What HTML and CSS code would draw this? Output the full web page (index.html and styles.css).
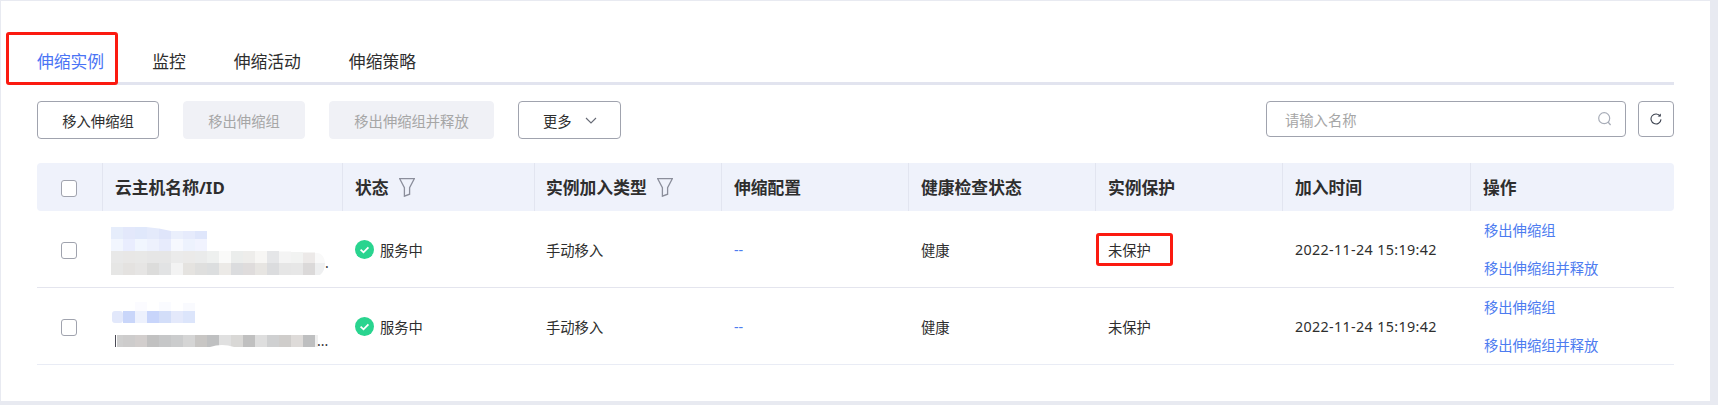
FILE: index.html
```html
<!DOCTYPE html>
<html lang="zh-CN">

<head>
  <meta charset="UTF-8" />
  <title>伸缩实例</title>
  <link rel="stylesheet" href="styles.css">
</head>

<body>
  <div class="panel">
    <div class="tabs">
      <a class="tab active">伸缩实例</a>
      <a class="tab">监控</a>
      <a class="tab">伸缩活动</a>
      <a class="tab">伸缩策略</a>
    </div>
    <div class="mark mark-tab"></div>

    <div class="toolbar">
      <button class="btn btn-in">移入伸缩组</button>
      <button class="btn btn-out" disabled>移出伸缩组</button>
      <button class="btn btn-release" disabled>移出伸缩组并释放</button>
      <button class="btn btn-more">更多
        <svg class="chevron" width="12" height="7" viewBox="0 0 12 7">
          <path d="M1 1l5 5 5-5" fill="none" stroke="#666a75" stroke-width="1.1" />
        </svg>
      </button>
      <div class="search">
        <span class="placeholder">请输入名称</span>
        <svg width="14" height="14" viewBox="0 0 14 14">
          <circle cx="6.2" cy="6.2" r="5.5" fill="none" stroke="#a8adb8" stroke-width="1.2" />
          <path d="M10 10l2.6 3" fill="none" stroke="#a8adb8" stroke-width="1.2" />
        </svg>
      </div>
      <button class="btn btn-refresh">
        <svg width="12" height="12" viewBox="0 0 12 12">
          <path d="M10.2 3.2A5 5 0 1 0 11 6.4" fill="none" stroke="#3d4350" stroke-width="1.1" />
          <path d="M7.6 3.6h3.2V.6z" fill="#3d4350" />
        </svg>
      </button>
    </div>

    <table class="grid">
      <colgroup>
        <col class="c-check">
        <col class="c-name">
        <col class="c-status">
        <col class="c-wide">
        <col class="c-wide">
        <col class="c-wide">
        <col class="c-wide">
        <col class="c-time">
        <col>
      </colgroup>
      <thead>
        <tr>
          <th class="cell-check"><span class="checkbox"></span></th>
          <th>云主机名称/ID</th>
          <th>
            <span class="th-filter">状态
              <svg width="16" height="19" viewBox="0 0 16 19">
                <path d="M.7.7h14.6L10.6 9.6v6.6l-5.2 2V9.6z" fill="none" stroke="#8b8e9b" stroke-width="1.3" />
              </svg>
            </span>
          </th>
          <th class="cell-type">
            <span class="th-filter">实例加入类型
              <svg width="16" height="19" viewBox="0 0 16 19">
                <path d="M.7.7h14.6L10.6 9.6v6.6l-5.2 2V9.6z" fill="none" stroke="#8b8e9b" stroke-width="1.3" />
              </svg>
            </span>
          </th>
          <th>伸缩配置</th>
          <th>健康检查状态</th>
          <th>实例保护</th>
          <th>加入时间</th>
          <th>操作</th>
        </tr>
      </thead>
      <tbody>
        <tr>
          <td class="cell-check"><span class="checkbox"></span></td>
          <td class="cell-name">
            <!-- blurred name and id -->
            <svg class="mosaic" width="230" height="50" viewBox="0 0 230 50">
              <g>
                <rect x="1" y="2" width="12" height="12" fill="#e6edfb" />
                <rect x="13" y="2" width="12" height="12" fill="#e3e8fb" />
                <rect x="25" y="2" width="12" height="12" fill="#e0e8fb" />
                <rect x="37" y="2" width="12" height="12" fill="#e4eafb" />
                <rect x="49" y="2" width="12" height="12" fill="#dfe5fa" />
                <rect x="61" y="2" width="12" height="12" fill="#eaeffc" />
                <rect x="73" y="2" width="12" height="12" fill="#e6ebfc" />
                <rect x="85" y="2" width="12" height="12" fill="#dfe6fb" />
                <rect x="1" y="14" width="12" height="12" fill="#f2f6fe" />
                <rect x="13" y="14" width="12" height="12" fill="#e9edfe" />
                <rect x="25" y="14" width="12" height="12" fill="#f1f6fe" />
                <rect x="37" y="14" width="12" height="12" fill="#edf1fd" />
                <rect x="49" y="14" width="12" height="12" fill="#e7ebfc" />
                <rect x="61" y="14" width="12" height="12" fill="#f6f8fe" />
                <rect x="73" y="14" width="12" height="12" fill="#edf2fd" />
                <rect x="85" y="14" width="12" height="12" fill="#f1f3fe" />
                <polygon points="36,2 97,2 97,6 61,6 49,3.5" fill="#fff" />
              </g>
              <g>
                <rect x="1" y="26" width="12" height="12" fill="#e8e8e8" />
                <rect x="13" y="26" width="12" height="12" fill="#e8e7e6" />
                <rect x="25" y="26" width="12" height="12" fill="#e8e8e7" />
                <rect x="37" y="26" width="12" height="12" fill="#e6e6e6" />
                <rect x="49" y="26" width="12" height="12" fill="#e6e6e6" />
                <rect x="61" y="26" width="12" height="12" fill="#ebebeb" />
                <rect x="73" y="26" width="12" height="12" fill="#ebeae9" />
                <rect x="85" y="26" width="12" height="12" fill="#eaebeb" />
                <rect x="97" y="26" width="12" height="12" fill="#eef0ef" />
                <rect x="109" y="26" width="12" height="12" fill="#fafaf9" />
                <rect x="121" y="26" width="12" height="12" fill="#ebedec" />
                <rect x="133" y="26" width="12" height="12" fill="#eeedeb" />
                <rect x="145" y="26" width="12" height="12" fill="#f7f6f4" />
                <rect x="157" y="26" width="12" height="12" fill="#e5e6e8" />
                <rect x="169" y="26.5" width="12" height="11.5" fill="#f4f4f4" />
                <rect x="181" y="27" width="12" height="11" fill="#f2f3f2" />
                <rect x="193" y="27.5" width="12" height="10.5" fill="#ece9e8" />
                <path d="M205 28h3q6 1 7 10h-10z" fill="#f9f9f9" />
                <rect x="1" y="38" width="12" height="12" fill="#e6e6e5" />
                <rect x="13" y="38" width="12" height="12" fill="#e4e2e0" />
                <rect x="25" y="38" width="12" height="12" fill="#e6e5e4" />
                <rect x="37" y="38" width="12" height="12" fill="#dcdcdb" />
                <rect x="49" y="38" width="12" height="12" fill="#e2e3e4" />
                <rect x="61" y="38" width="12" height="12" fill="#f3f3f3" />
                <rect x="73" y="38" width="12" height="12" fill="#e5e3e0" />
                <rect x="85" y="38" width="12" height="12" fill="#dfdfde" />
                <rect x="97" y="38" width="12" height="12" fill="#dcdedf" />
                <rect x="109" y="38" width="12" height="12" fill="#eceae7" />
                <rect x="121" y="38" width="12" height="12" fill="#dbdcde" />
                <rect x="133" y="38" width="12" height="12" fill="#dfdcdc" />
                <rect x="145" y="38" width="12" height="12" fill="#e7e5e2" />
                <rect x="157" y="38" width="12" height="12" fill="#dbdcde" />
                <rect x="169" y="38" width="12" height="12" fill="#e6e6e6" />
                <rect x="181" y="38" width="12" height="12" fill="#e7e7e7" />
                <rect x="193" y="38" width="12" height="12" fill="#dbd9d9" />
                <path d="M205 38h10q0 8-5 12h-5z" fill="#eeeff0" />
              </g>
              <text class="mosaic-dots" x="215" y="43">.</text>
            </svg>
          </td>
          <td>
            <span class="state">
              <svg width="19" height="19" viewBox="0 0 19 19">
                <circle cx="9.5" cy="9.5" r="9.5" fill="#29d48f" />
                <path d="M5.6 9.6l2.9 2.7 4.9-4.9" fill="none" stroke="#fff" stroke-width="1.8" />
              </svg>
              服务中
            </span>
          </td>
          <td class="cell-type">手动移入</td>
          <td class="link">--</td>
          <td>健康</td>
          <td>未保护</td>
          <td class="time">2022-11-24 15:19:42</td>
          <td class="cell-action">
            <a class="link">移出伸缩组</a>
            <a class="link">移出伸缩组并释放</a>
          </td>
        </tr>
        <tr>
          <td class="cell-check"><span class="checkbox"></span></td>
          <td class="cell-name">
            <svg class="mosaic" width="230" height="50" viewBox="0 0 230 50">
              <g>
                <rect x="25" y="0" width="12" height="9" fill="#fbfbff" />
                <rect x="49" y="0" width="12" height="9" fill="#fafbff" />
                <rect x="73" y="1" width="12" height="8" fill="#f9fafe" />
                <rect x="2" y="9" width="11" height="12" rx="3" fill="#e2e8fb" />
                <rect x="13" y="9" width="12" height="12" fill="#c9d6fa" />
                <rect x="25" y="9" width="12" height="12" fill="#edf1fd" />
                <rect x="37" y="9" width="12" height="12" fill="#c8d5fb" />
                <rect x="49" y="9" width="12" height="12" fill="#d3def9" />
                <rect x="61" y="9" width="12" height="12" fill="#e4e9fb" />
                <rect x="73" y="9" width="12" height="12" fill="#dce5fb" />
              </g>
              <g>
                <rect x="5" y="33" width="1" height="12" fill="#4a4a55" />
                <rect x="7" y="33" width="6" height="12" fill="#cfcfcf" />
                <rect x="13" y="33" width="12" height="12" fill="#cdcccc" />
                <rect x="25" y="33" width="12" height="12" fill="#d2cecd" />
                <rect x="37" y="33" width="12" height="12" fill="#c1c1c1" />
                <rect x="49" y="33" width="12" height="12" fill="#c6c7c8" />
                <rect x="61" y="33" width="12" height="12" fill="#cbcccd" />
                <rect x="73" y="33" width="12" height="12" fill="#d5d5d5" />
                <rect x="85" y="33" width="12" height="12" fill="#c8c6c4" />
                <rect x="97" y="33" width="12" height="12" fill="#bfc0c1" />
                <rect x="109" y="33" width="12" height="12" fill="#e0e0e0" />
                <rect x="121" y="33" width="12" height="12" fill="#d9d8d6" />
                <rect x="133" y="33" width="12" height="12" fill="#c0c0c0" />
                <rect x="145" y="33" width="12" height="12" fill="#dedede" />
                <rect x="157" y="33" width="12" height="12" fill="#cfd0d1" />
                <rect x="169" y="33" width="12" height="12" fill="#cfcdcb" />
                <rect x="181" y="33" width="12" height="12" fill="#dedbd9" />
                <rect x="193" y="33" width="12" height="12" fill="#bebfc0" />
                <rect x="205" y="33" width="3" height="12" fill="#f0f0f0" />
                <path d="M100 45q12-4 24 0z" fill="#fff" />
              </g>
              <text class="mosaic-dots" x="207" y="44">...</text>
            </svg>
          </td>
          <td>
            <span class="state">
              <svg width="19" height="19" viewBox="0 0 19 19">
                <circle cx="9.5" cy="9.5" r="9.5" fill="#29d48f" />
                <path d="M5.6 9.6l2.9 2.7 4.9-4.9" fill="none" stroke="#fff" stroke-width="1.8" />
              </svg>
              服务中
            </span>
          </td>
          <td class="cell-type">手动移入</td>
          <td class="link">--</td>
          <td>健康</td>
          <td>未保护</td>
          <td class="time">2022-11-24 15:19:42</td>
          <td class="cell-action">
            <a class="link">移出伸缩组</a>
            <a class="link">移出伸缩组并释放</a>
          </td>
        </tr>
      </tbody>
    </table>
    <div class="mark mark-cell"></div>
  </div>
</body>

</html>
```

FILE: styles.css
```css
* {
  box-sizing: border-box;
}

html,
body {
  height: 100%;
}

body {
  margin: 0;
  overflow: hidden;
  font-family: "Noto Sans", "Noto Sans CJK SC", sans-serif;
  font-size: 14.3px;
  color: #2e2e2e;
  background: #e8eaf1;
}

.panel {
  position: relative;
  height: 400px;
  margin: 1px 8px 0 1px;
  padding: 0 36px;
  background: #fff;
}

.tabs {
  display: flex;
  gap: 48px;
  height: 84px;
  padding-top: 47px;
  border-bottom: 3px solid #e2e4ef;
  font-size: 16.8px;
  line-height: 28px;
}

.tab.active {
  color: #4a74f5;
}

.mark {
  position: absolute;
  border: 3px solid #fb1a10;
  border-radius: 3px;
}

.mark-tab {
  left: 5px;
  top: 31px;
  width: 112px;
  height: 53px;
}

.mark-cell {
  left: 1095px;
  top: 232px;
  width: 77px;
  height: 33px;
}

.toolbar {
  display: flex;
  align-items: flex-start;
  gap: 24px;
  margin-top: 16px;
}

.btn {
  height: 38px;
  padding: 0;
  border: 1px solid #a0a3ae;
  border-radius: 4px;
  background: #fff;
  color: #2e2e2e;
  font: inherit;
}

.btn[disabled] {
  border-color: #f0f1f6;
  background: #f0f1f6;
  color: #a6a6a6;
}

.btn-in,
.btn-out {
  width: 122px;
}

.btn-release {
  width: 165px;
}

.btn-more {
  display: flex;
  align-items: center;
  gap: 13px;
  width: 103px;
  padding-left: 24px;
}

.search {
  display: flex;
  align-items: center;
  justify-content: space-between;
  width: 360px;
  height: 36px;
  margin-left: auto;
  padding: 0 13px 0 18px;
  border: 1px solid #a0a3ae;
  border-radius: 4px;
}

.placeholder {
  color: #a6a6a6;
}

.btn-refresh {
  display: flex;
  align-items: center;
  justify-content: center;
  width: 36px;
  height: 36px;
  margin-left: -12px;
}

.grid {
  width: 1637px;
  margin-top: 24px;
  border-collapse: separate;
  border-spacing: 0;
  table-layout: fixed;
}

.c-check {
  width: 65px;
}

.c-name {
  width: 240px;
}

.c-status {
  width: 192px;
}

.c-wide {
  width: 187px;
}

.c-time {
  width: 188px;
}

th {
  height: 48px;
  padding: 0 0 0 12px;
  border-left: 1px solid #e2e5f0;
  background: #eff2fb;
  font-size: 16.8px;
  font-weight: 700;
  text-align: left;
}

th:first-child {
  border-left: 0;
  border-radius: 4px 0 0 4px;
}

th:last-child {
  border-radius: 0 4px 4px 0;
}

td {
  height: 77px;
  padding: 0 0 0 13px;
  border-bottom: 1px solid #e4e5ee;
}

tbody tr:last-child td {
  border-bottom-color: #e9ecf5;
}

th.cell-check,
td.cell-check {
  padding: 0 2px 0 0;
  text-align: center;
}

th.cell-type {
  padding-left: 11px;
}

td.cell-type {
  padding-left: 12px;
}

.checkbox {
  display: inline-block;
  width: 16px;
  height: 17px;
  border: 1px solid #a0a3ae;
  border-radius: 3px;
  background: #fff;
  vertical-align: middle;
}

.th-filter {
  display: inline-flex;
  align-items: center;
  gap: 10px;
}

.cell-name {
  padding-left: 8px;
}

.mosaic {
  display: block;
  margin-top: 1px;
}

.mosaic-dots {
  font-size: 14px;
  fill: #333;
}

.state {
  display: inline-flex;
  align-items: center;
  gap: 6px;
  vertical-align: middle;
}

.link {
  color: #4d7cf0;
}

.time {
  letter-spacing: 0.35px;
}

.cell-action {
  padding-left: 14px;
}

.cell-action a {
  display: block;
  line-height: 19px;
}

.cell-action a + a {
  margin-top: 19px;
}
```
